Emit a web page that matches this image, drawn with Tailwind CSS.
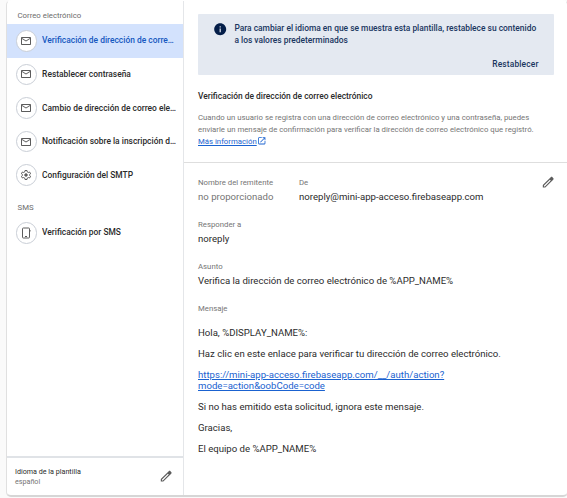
<!DOCTYPE html>
<html lang="es">
<head>
<meta charset="utf-8">
<title>Plantillas</title>
<script src="https://cdn.jsdelivr.net/npm/@tailwindcss/browser@4"></script>
</head>
<body class="h-[498px] overflow-hidden bg-[#fafafa] pl-[5.5px] font-[Roboto,sans-serif] text-[#2b2b2b]">
<svg class="hidden">
  <symbol id="mail" viewBox="0 0 24 24"><path fill="currentColor" d="M22 6c0-1.100-.9-2-2-2H4c-1.100 0-2 .9-2 2v12c0 1.100.9 2 2 2h16c1.100 0 2-.9 2-2V6zm-2 0-8 5-8-5h16zm0 12H4V8l8 5 8-5v10z"/></symbol>
  <symbol id="pencil" viewBox="0 0 24 24"><path fill="currentColor" d="M20.410 4.940l-1.350-1.350c-.78-.78-2.050-.78-2.830 0L3 16.820V21h4.180L20.410 7.770c.79-.78.79-2.050 0-2.830zM6.410 19.060L5 19v-1.360l9.820-9.820 1.410 1.410-9.820 9.830z"/></symbol>
</svg>
<div class="flex h-[497px] w-[562px] rounded-[5px] border border-[#e0e0e0] border-t-transparent border-b-2 border-b-[#d6d6d6] bg-white">
  <nav class="flex w-[177.500px] shrink-0 flex-col border-r border-[#e4e6e9] text-[8.42px] font-medium">
    <h2 class="h-[23px] pt-[9px] pl-[11px] text-[7.8px] leading-[12px] font-normal text-[#6c6c6c]">Correo electrónico</h2>
    <a class="flex h-[33.6px] items-center gap-[5px] bg-[#d3e2fd] pl-[9px] text-[#1558c0]"><span class="flex size-[21.6px] shrink-0 items-center justify-center rounded-full border border-[#c9ced6] bg-white text-[#5c5c5c]"><svg class="size-[12px]"><use href="#mail"/></svg></span><span class="w-[135px] truncate">Verificación de dirección de correo electrónico</span></a>
    <a class="flex h-[33.6px] items-center gap-[5px] pl-[9px]"><span class="flex size-[21.6px] shrink-0 items-center justify-center rounded-full border border-[#c9ced6] text-[#5c5c5c]"><svg class="size-[12px]"><use href="#mail"/></svg></span><span class="w-[135px] truncate">Restablecer contraseña</span></a>
    <a class="flex h-[33.6px] items-center gap-[5px] pl-[9px]"><span class="flex size-[21.6px] shrink-0 items-center justify-center rounded-full border border-[#c9ced6] text-[#5c5c5c]"><svg class="size-[12px]"><use href="#mail"/></svg></span><span class="w-[135px] truncate">Cambio de dirección de correo electrónico</span></a>
    <a class="flex h-[33.6px] items-center gap-[5px] pl-[9px]"><span class="flex size-[21.6px] shrink-0 items-center justify-center rounded-full border border-[#c9ced6] text-[#5c5c5c]"><svg class="size-[12px]"><use href="#mail"/></svg></span><span class="w-[135px] truncate">Notificación sobre la inscripción de varios factores</span></a>
    <a class="flex h-[33.6px] items-center gap-[5px] pl-[9px]"><span class="flex size-[21.6px] shrink-0 items-center justify-center rounded-full border border-[#c9ced6] text-[#5c5c5c]"><svg class="size-[12px]" viewBox="0 0 24 24" fill="none" stroke="currentColor" stroke-width="2" stroke-linejoin="round"><path d="M10 3h4l.5 2.800 2 1.200 2.700-1 2 3.500-2.200 1.800v1.400l2.200 1.800-2 3.500-2.700-1-2 1.200L14 21h-4l-.5-2.800-2-1.200-2.700 1-2-3.500L5 12.700v-1.400L2.800 9.500l2-3.500 2.700 1 2-1.200z"/><circle cx="12" cy="12" r="2.500" fill="currentColor"/></svg></span><span class="w-[135px] truncate">Configuración del SMTP</span></a>
    <h2 class="h-[24px] pt-[10px] pl-[11px] text-[7.8px] leading-[12px] font-normal text-[#6c6c6c]">SMS</h2>
    <a class="flex h-[33.6px] items-center gap-[5px] pl-[9px]"><span class="flex size-[21.6px] shrink-0 items-center justify-center rounded-full border border-[#c9ced6] text-[#5c5c5c]"><svg class="size-[12px]" viewBox="0 0 24 24" fill="none" stroke="currentColor" stroke-width="2"><rect x="5" y="2" width="14" height="20" rx="1.500"/><path d="M10 19h4M20 6v3"/></svg></span><span class="w-[135px] truncate">Verificación por SMS</span></a>
    <footer class="mt-auto flex h-[39px] items-center justify-between border-t-2 border-[#e0e3e7] pr-[10px] pl-[8.5px] text-[7.16px] leading-[9.6px] font-normal">
      <div><p>Idioma de la plantilla</p><p class="text-[#757575]">español</p></div>
      <svg class="size-[14.4px] text-[#5c5c5c]"><use href="#pencil"/></svg>
    </footer>
  </nav>
  <main class="min-w-0 flex-1">
    <header class="h-[162px] border-b border-[#dedede] pt-[13px] pl-[14px]">
      <div class="flex h-[61px] w-[356px] flex-col rounded-[1px] bg-[#e4e9f1] pt-[8px] pr-[15.5px] pl-[15px] text-[8.42px] leading-[12px] font-medium text-[#193660]">
        <div class="flex gap-[7px]">
          <svg class="size-[14.4px] shrink-0 text-[#041e49]" viewBox="0 0 24 24"><path fill="currentColor" d="M12 2C6.480 2 2 6.480 2 12s4.480 10 10 10 10-4.480 10-10S17.520 2 12 2zm1 15h-2v-6h2v6zm0-8h-2V7h2v2z"/></svg>
          <p class="whitespace-nowrap">Para cambiar el idioma en que se muestra esta plantilla, restablece su contenido<br>a los valores predeterminados</p>
        </div>
        <span class="mt-[12px] self-end tracking-[0.14px]">Restablecer</span>
      </div>
      <h1 class="mt-[15px] text-[8.42px] leading-[12px] font-medium">Verificación de dirección de correo electrónico</h1>
      <p class="mt-[10px] text-[7.79px] leading-[12px] whitespace-nowrap text-[#757575]">Cuando un usuario se registra con una dirección de correo electrónico y una contraseña, puedes<br>enviarle un mensaje de confirmación para verificar la dirección de correo electrónico que registró.<br><a class="text-[#1a62d0] underline">Más información</a><svg class="inline size-[9.6px] align-[-2px] text-[#1a62d0]" viewBox="0 0 24 24"><path fill="currentColor" d="M19 19H5V5h7V3H5a2 2 0 0 0-2 2v14a2 2 0 0 0 2 2h14c1.100 0 2-.9 2-2v-7h-2v7zM14 3v2h3.590l-9.830 9.830 1.410 1.410L19 6.410V10h2V3h-7z"/></svg></p>
    </header>
    <section class="pt-[13px] pl-[14px] text-[9.6px] leading-[15px] whitespace-nowrap">
      <div class="flex">
        <div class="w-[101px]"><h3 class="text-[7.79px] leading-[14px] text-[#757575]">Nombre del remitente</h3><p class="-mt-[1px] text-[#757575]">no proporcionado</p></div>
        <div class="flex-1"><h3 class="text-[7.79px] leading-[14px] text-[#757575]">De</h3><p class="-mt-[1px]">noreply@mini-app-acceso.firebaseapp.com</p></div>
        <svg class="-mt-[1px] mr-[11px] size-[14.4px] text-[#5c5c5c]"><use href="#pencil"/></svg>
      </div>
      <h3 class="mt-[14px] text-[7.79px] leading-[14px] text-[#757575]">Responder a</h3><p class="-mt-[1px]">noreply</p>
      <h3 class="mt-[14px] text-[7.79px] leading-[14px] text-[#757575]">Asunto</h3><p class="-mt-[1px]">Verifica la dirección de correo electrónico de %APP_NAME%</p>
      <h3 class="mt-[14px] text-[7.79px] leading-[14px] text-[#757575]">Mensaje</h3>
      <div class="mt-[11px] flex flex-col gap-[9.6px] leading-[11.4px]">
        <p>Hola, %DISPLAY_NAME%:</p>
        <p>Haz clic en este enlace para verificar tu dirección de correo electrónico.</p>
        <p class="text-[#1a62d0] underline">https://mini-app-acceso.firebaseapp.com/__/auth/action?<br>mode=action&amp;oobCode=code</p>
        <p>Si no has emitido esta solicitud, ignora este mensaje.</p>
        <p>Gracias,</p>
        <p>El equipo de %APP_NAME%</p>
      </div>
    </section>
  </main>
</div>
</body>
</html>
